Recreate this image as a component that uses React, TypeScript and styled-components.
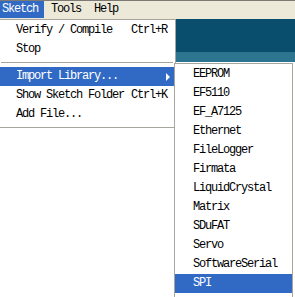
import React from 'react';
import styled, { createGlobalStyle } from 'styled-components';

const GlobalStyle = createGlobalStyle`
  html, body {
    margin: 0;
    padding: 0;
    background: #ffffff;
    overflow: hidden;
  }
  body {
    font-family: "Liberation Mono", "DejaVu Sans Mono", monospace;
  }
`;

const Window = styled.div`
  position: relative;
  width: 295px;
  height: 297px;
  box-sizing: border-box;
  border-top: 1px solid #7d7a75;
  display: flex;
  flex-direction: column;
  overflow: hidden;
  font-size: 12px;
  letter-spacing: -1.2px;
  color: #000;
`;

const MenuBar = styled.div`
  display: flex;
  align-items: flex-start;
  height: 18px;
  margin-left: -4px;
  background: #ece9d8;
  flex: none;
`;

const MenuBarItem = styled.div<{ $active?: boolean }>`
  height: 17px;
  line-height: 17px;
  padding: 0 6px;
  margin-right: 1px;
  white-space: pre;
  background: ${(p) => (p.$active ? '#316ac5' : 'transparent')};
  color: ${(p) => (p.$active ? '#ffffff' : '#000000')};
`;

const Toolbar = styled.div`
  height: 33px;
  flex: none;
  background: #094f6d;
`;

const TabStrip = styled.div`
  height: 10px;
  flex: none;
  background: #2d7490;
`;

const Editor = styled.div`
  flex: 1;
  background: #ffffff;
`;

const Menu = styled.div`
  position: absolute;
  top: 18px;
  left: -2px;
  width: 178px;
  box-sizing: border-box;
  background: #ffffff;
  border: 1px solid #a7a59c;
  padding: 1px 1px 3px;
`;

const SubMenu = styled.div`
  position: absolute;
  top: -4px;
  left: 174px;
  width: 119px;
  box-sizing: border-box;
  background: #ffffff;
  border: 1px solid #a7a59c;
  padding: 1px 0 12px;
  color: #000;
`;

const Item = styled.div<{ $active?: boolean }>`
  position: relative;
  display: grid;
  grid-template-columns: 1fr auto;
  height: 19px;
  line-height: 19px;
  padding-left: 16px;
  white-space: pre;
  background: ${(p) => (p.$active ? '#316ac5' : 'transparent')};
  color: ${(p) => (p.$active ? '#ffffff' : '#000000')};
`;

const SubItem = styled(Item)`
  padding-left: 18px;
`;

const Shortcut = styled.span`
  padding-right: 7px;
`;

const Arrow = styled.span`
  position: absolute;
  right: 4px;
  top: 6px;
  width: 0;
  height: 0;
  border-left: 4px solid #ffffff;
  border-top: 4px solid transparent;
  border-bottom: 4px solid transparent;
`;

const Separator = styled.div`
  height: 1px;
  margin: 3px 1px 4px;
  background: #a7a59c;
`;

const libraries = [
  'EEPROM',
  'EF5110',
  'EF_A7125',
  'Ethernet',
  'FileLogger',
  'Firmata',
  'LiquidCrystal',
  'Matrix',
  'SDuFAT',
  'Servo',
  'SoftwareSerial',
  'SPI',
];

export default function App() {
  return (
    <>
      <GlobalStyle />
      <Window>
        <MenuBar>
          <MenuBarItem $active>Sketch</MenuBarItem>
          <MenuBarItem>Tools</MenuBarItem>
          <MenuBarItem>Help</MenuBarItem>
        </MenuBar>
        <Toolbar />
        <TabStrip />
        <Editor />
        <Menu>
          <Item>
            <span>Verify / Compile</span>
            <Shortcut>Ctrl+R</Shortcut>
          </Item>
          <Item>
            <span>Stop</span>
          </Item>
          <Separator />
          <Item $active>
            <span>Import Library...</span>
            <Arrow />
            <SubMenu>
              {libraries.map((name) => (
                <SubItem key={name} $active={name === 'SPI'}>
                  <span>{name}</span>
                </SubItem>
              ))}
            </SubMenu>
          </Item>
          <Item>
            <span>Show Sketch Folder</span>
            <Shortcut>Ctrl+K</Shortcut>
          </Item>
          <Item>
            <span>Add File...</span>
          </Item>
        </Menu>
      </Window>
    </>
  );
}
